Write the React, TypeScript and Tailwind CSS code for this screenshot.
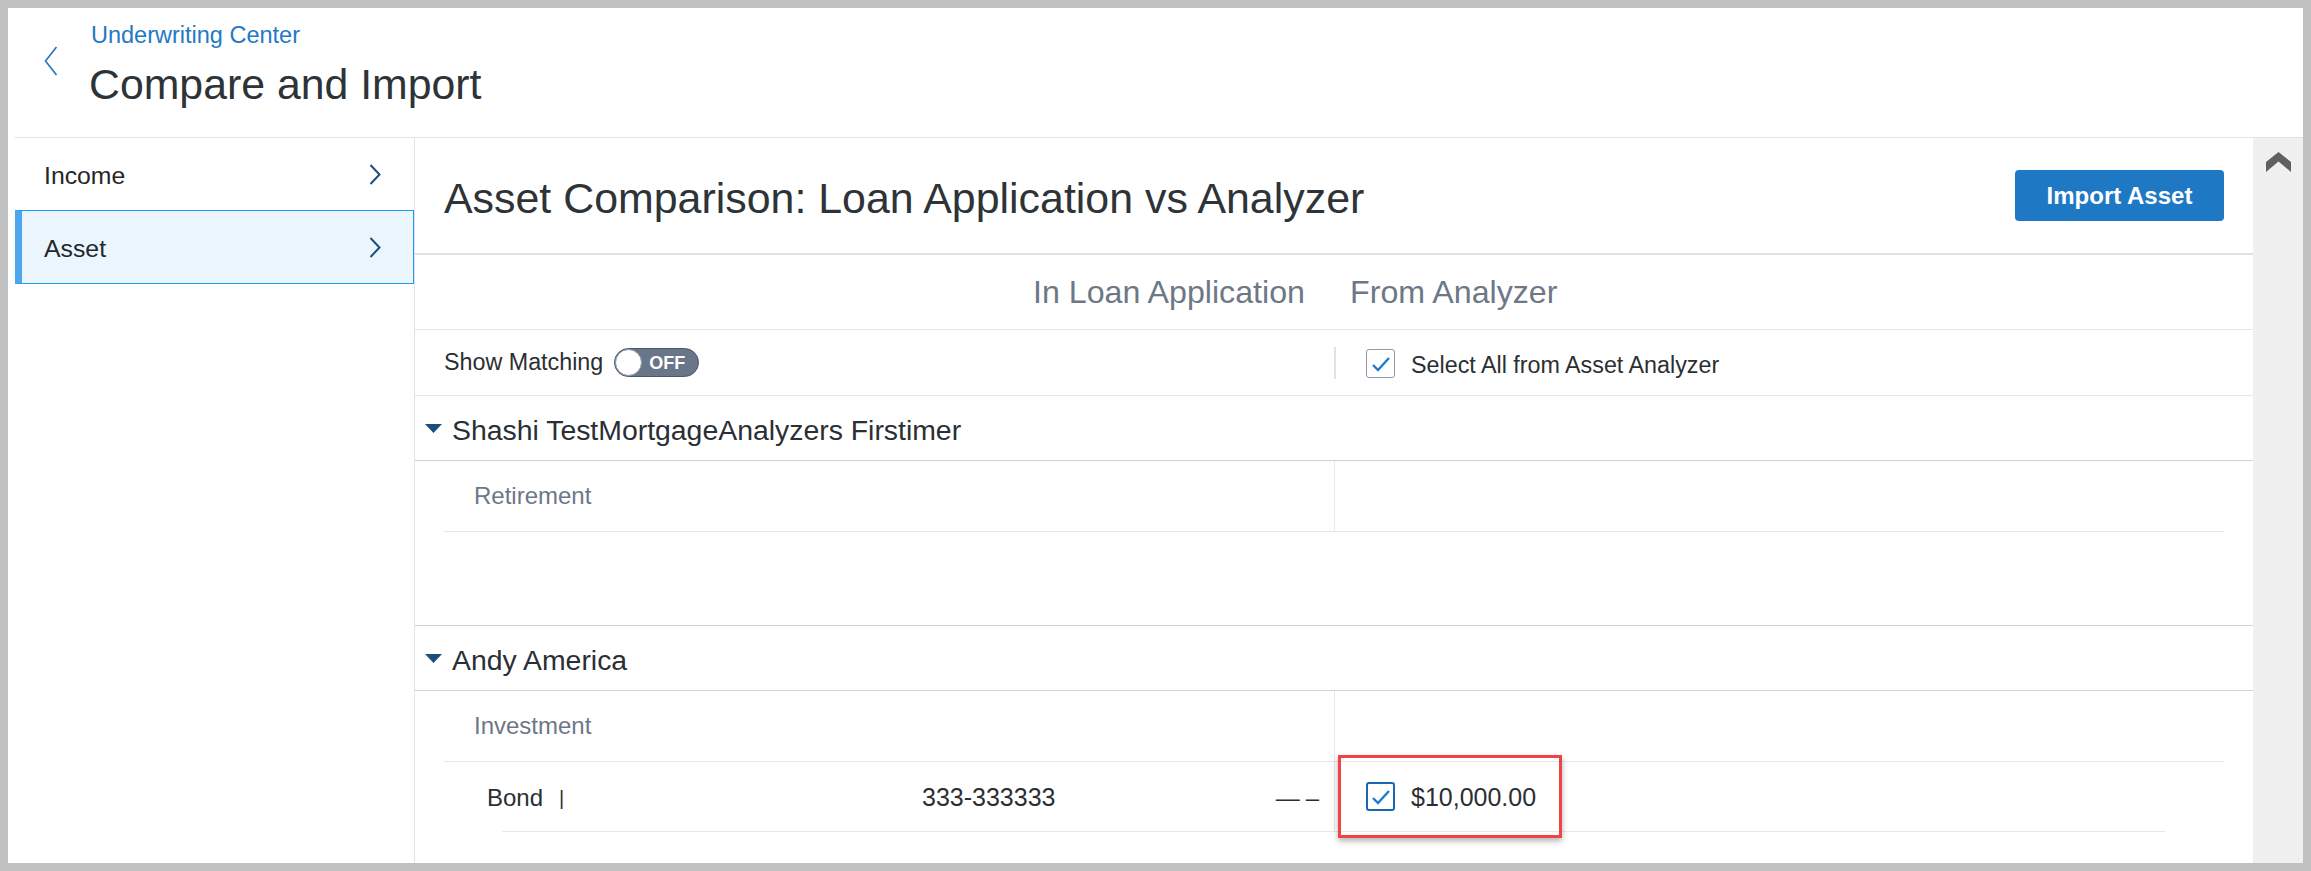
import type { ReactNode } from "react";

function SideChevron() {
  return (
    <svg width="12" height="21" viewBox="0 0 12 21" className="shrink-0">
      <path d="M1.5 1 L10.5 10.5 L1.5 20" fill="none" stroke="#1c4f7c" strokeWidth="2" />
    </svg>
  );
}

function Caret() {
  return (
    <svg width="17" height="9" viewBox="0 0 17 9" className="shrink-0">
      <path d="M0 0 H17 L8.5 9 Z" fill="#1b4f7a" />
    </svg>
  );
}

function Check({ strong }: { strong?: boolean }) {
  return (
    <span
      className={
        strong
          ? "flex h-[29px] w-[29px] shrink-0 items-center justify-center rounded-[3px] border-2 border-[#1c67ad] bg-white"
          : "flex h-[29px] w-[29px] shrink-0 items-center justify-center rounded-[3px] border border-[#8e99a6] bg-white"
      }
    >
      <svg width="22" height="20" viewBox="0 0 22 20">
        <path d="M3 11 L8 16 L19 4" fill="none" stroke="#1f7bd2" strokeWidth="2.4" />
      </svg>
    </span>
  );
}

function Toggle() {
  return (
    <span className="ml-[11px] flex h-[29px] w-[85px] items-center rounded-full border border-[#4d596b] bg-[#697689]">
      <span className="h-[27px] w-[27px] rounded-full border border-[#8a94a3] bg-white" />
      <span className="ml-[7px] text-[18px] font-bold leading-none text-white">OFF</span>
    </span>
  );
}

function SectionHeader({ name }: { name: string }) {
  return (
    <div className="flex h-[65px] items-center border-b border-[#cdd3db] pl-[10px]">
      <Caret />
      <span className="ml-[10px] pt-[5px] text-[28.4px] leading-none text-[#2a2f36]">{name}</span>
    </div>
  );
}

function CategoryRow({ label }: { label: string }) {
  return (
    <div className="grid h-[71px] grid-cols-2 border-b border-[#e6e8eb]">
      <div className="flex items-center pl-[30px] text-[24px] text-[#6d7886]">{label}</div>
      <div className="border-l border-[#e6e8eb]" />
    </div>
  );
}

function Row({ children }: { children: ReactNode }) {
  return <div className="px-[29px]">{children}</div>;
}

export default function App() {
  return (
    <div className="h-[871px] w-[2311px] bg-[#c0c0c0] p-2 font-['Liberation_Sans',Arial,sans-serif] text-[#2b2f33]">
      <div className="flex h-full flex-col bg-white pl-[7px]">
        <header className="flex h-[130px] shrink-0 border-b border-[#dfe2e6] pl-[29px] pt-[16px]">
          <svg className="mt-[22px] shrink-0" width="14" height="30" viewBox="0 0 14 30">
            <path d="M12.5 1 L1.5 15 L12.5 29" fill="none" stroke="#2373bb" strokeWidth="1.6" />
          </svg>
          <div className="ml-[31px]">
            <div className="pl-[2px] text-[23.5px] leading-none text-[#2479c4]">Underwriting Center</div>
            <h1 className="mt-[15px] text-[42.8px] leading-none text-[#2e3338]">Compare and Import</h1>
          </div>
        </header>

        <div className="flex min-h-0 flex-1">
          <nav className="w-[400px] shrink-0 border-r border-[#dfe2e8]">
            <div className="flex h-[72px] items-center justify-between pl-[29px] pr-[33px] text-[24.8px] text-[#23272b]">
              <span className="pt-[3px]">Income</span>
              <SideChevron />
            </div>
            <div className="flex h-[74px] items-center justify-between border border-l-[7px] border-[#1e9be9] border-l-[#4ea7ec] bg-[#eaf5fe] pl-[22px] pr-[32px] text-[24.8px] text-[#23272b]">
              <span className="pt-[3px]">Asset</span>
              <SideChevron />
            </div>
          </nav>

          <main className="flex min-w-0 flex-1 flex-col overflow-hidden">
            <div className="flex h-[117px] shrink-0 items-center justify-between border-b-2 border-[#dde2e7] px-[29px]">
              <h2 className="pt-[5px] text-[42.9px] leading-none text-[#2e3338]">
                Asset Comparison: Loan Application vs Analyzer
              </h2>
              <button className="h-[51px] w-[209px] rounded-[4px] bg-[#1f78c4] text-[24px] font-bold text-white">
                Import Asset
              </button>
            </div>

            <Row>
              <div className="grid h-[74px] grid-cols-2 items-center text-[32.2px] leading-none text-[#6d7886]">
                <div className="pr-[29px] text-right">In Loan Application</div>
                <div className="pl-[16px]">From Analyzer</div>
              </div>
            </Row>
            <div className="border-b border-[#e3e6ea]" />

            <Row>
              <div className="grid h-[65px] grid-cols-2 items-center text-[23.3px]">
                <div className="flex items-center">
                  Show Matching
                  <Toggle />
                </div>
                <div className="flex items-center">
                  <span className="h-[32px] w-[2px] bg-[#dfe2e6]" />
                  <span className="ml-[30px] pt-[2px]">
                    <Check />
                  </span>
                  <span className="ml-[16px] pt-[6px]">Select All from Asset Analyzer</span>
                </div>
              </div>
            </Row>
            <div className="border-b border-[#e3e6ea]" />

            <section className="border-b border-[#cdd3db] pb-[93px]">
              <SectionHeader name="Shashi TestMortgageAnalyzers Firstimer" />
              <Row>
                <CategoryRow label="Retirement" />
              </Row>
            </section>

            <section>
              <SectionHeader name="Andy America" />
              <Row>
                <CategoryRow label="Investment" />
                <div className="grid h-[69px] grid-cols-2 text-[24px]">
                  <div className="flex items-center pr-[15px] pt-[2px]">
                    <span className="flex w-[478px] items-center pl-[43px]">
                      Bond
                      <span className="ml-[16px] text-[20px]">|</span>
                    </span>
                    <span className="text-[25px]">333-333333</span>
                    <span className="ml-auto flex items-center">
                      <span>—</span>
                      <span className="ml-[6px]">–</span>
                    </span>
                  </div>
                  <div className="relative flex items-center border-l border-[#e6e8eb] pl-[31px]">
                    <div className="absolute left-[3px] top-[-7px] h-[83px] w-[224px] border-[3px] border-[#ef4444] shadow-[0_3px_6px_rgba(0,0,0,0.3)]" />
                    <Check strong />
                    <span className="ml-[16px] pt-[2px] text-[25px]">$10,000.00</span>
                  </div>
                </div>
                <div className="ml-[58px] mr-[59px] h-px bg-[#e6e8eb]" />
              </Row>
            </section>
          </main>

          <div className="w-[50px] shrink-0 bg-[#f0f0f0] pl-[13px] pt-[14px]">
            <svg width="25" height="20" viewBox="0 0 25 20">
              <path d="M12.5 0 L25 10 L25 20 L12.5 9.5 L0 20 L0 10 Z" fill="#606060" />
            </svg>
          </div>
        </div>
      </div>
    </div>
  );
}
